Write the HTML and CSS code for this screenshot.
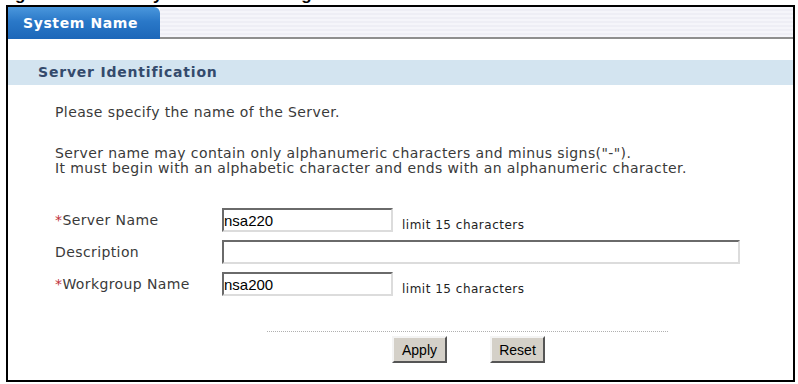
FILE: index.html
```html
<!doctype html>
<html>
<head>
<meta charset="utf-8">
<title>System Name</title>
<link rel="stylesheet" href="styles.css">
</head>

<body>
<div class="caption"><span>Figure 72&nbsp;&nbsp;&nbsp;&nbsp;&nbsp;&nbsp;&nbsp;&nbsp;&nbsp;&nbsp;&nbsp;&nbsp;&nbsp;&nbsp;System Name Configuration</span></div>
<div class="frame">
	<div class="tabbar">
		<div class="tab">System Name</div>
		<div class="tabrest"></div>
	</div>
	<div class="section">Server Identification</div>
	<div class="content">
		<p class="intro">Please specify the name of the Server.</p>
		<p class="rules">Server name may contain only alphanumeric characters and minus signs("-").<br>It must begin with an alphabetic character and ends with an alphanumeric character.</p>
		<div class="form">
			<div class="row">
				<label class="lbl"><span class="req">*</span>Server Name</label>
				<input class="txt short" type="text" value="nsa220">
				<span class="hint">limit 15 characters</span>
			</div>
			<div class="row">
				<label class="lbl">Description</label>
				<input class="txt long" type="text" value="">
			</div>
			<div class="row">
				<label class="lbl"><span class="req">*</span>Workgroup Name</label>
				<input class="txt short" type="text" value="nsa200">
				<span class="hint">limit 15 characters</span>
			</div>
		</div>
	</div>
	<div class="actions">
		<button class="btn" type="button">Apply</button>
		<button class="btn" type="button">Reset</button>
	</div>
</div>
</body>
</html>
```

FILE: styles.css
```css
*{margin:0; padding:0; box-sizing:border-box;}
body{width:798px; height:384px; overflow:hidden; background:#fff; font-family:"DejaVu Sans",Verdana,sans-serif; color:#3a3a3a;}
.caption{height:5px; overflow:hidden; display:flex; align-items:flex-end; font-family:"Liberation Sans",Arial,sans-serif; font-weight:bold; font-size:17px; color:#000; white-space:nowrap;}
.frame{width:789px; height:377px; margin-left:6px; border:2px solid #000; display:flex; flex-direction:column;}

.tabbar{display:flex; height:32px;}
.tab{width:152px; background:linear-gradient(#4a97dc,#2a78c8 45%,#1c67b9); color:#fff; font-weight:bold; font-size:14px; padding:8px 0 0 15px; border-radius:0 6px 0 0; letter-spacing:0.6px;}
.tabrest{flex:1; background:repeating-linear-gradient(#f5f5fa 0,#f5f5fa 2px,#eeeef5 2px,#eeeef5 4px); border-bottom:2px solid #8e8e8e;}

.section{margin-top:21px; height:25px; background:#d3e4f0; color:#344a6c; font-weight:bold; font-size:14px; padding:4px 0 0 30px; letter-spacing:0.8px;}

.content{padding-left:47px; font-size:14px; line-height:15px; letter-spacing:0.4px;}
.intro{margin-top:20px;}
.rules{margin-top:26px;}

.form{margin-top:32px; display:flex; flex-direction:column; gap:8px;}
.row{display:flex; align-items:center; height:24px;}
.lbl{width:167px;}
.req{color:#c0303a;}
.txt{height:24px; border:2px solid; border-color:#6a6a6a #dcdcdc #dcdcdc #6a6a6a; font-family:"Liberation Sans",Arial,sans-serif; font-size:15px; letter-spacing:0; color:#000; padding:0 1px 0 0; outline:none; background:#fff;}
.short{width:171px;}
.long{width:518px;}
.hint{margin-left:9px; font-size:12px; letter-spacing:0.5px; color:#222; align-self:flex-end; line-height:14px;}

.actions{margin:35px 0 0 259px; width:401px; border-top:1px dotted #b0b0b0; padding:4px 0 0 125px; display:flex; gap:43px;}
.btn{width:55px; height:27px; background:#d4d0c8; border:2px solid; border-color:#f4f4f4 #555 #555 #f4f4f4; font-family:"Liberation Sans",Arial,sans-serif; font-size:14px; color:#000;}
```
